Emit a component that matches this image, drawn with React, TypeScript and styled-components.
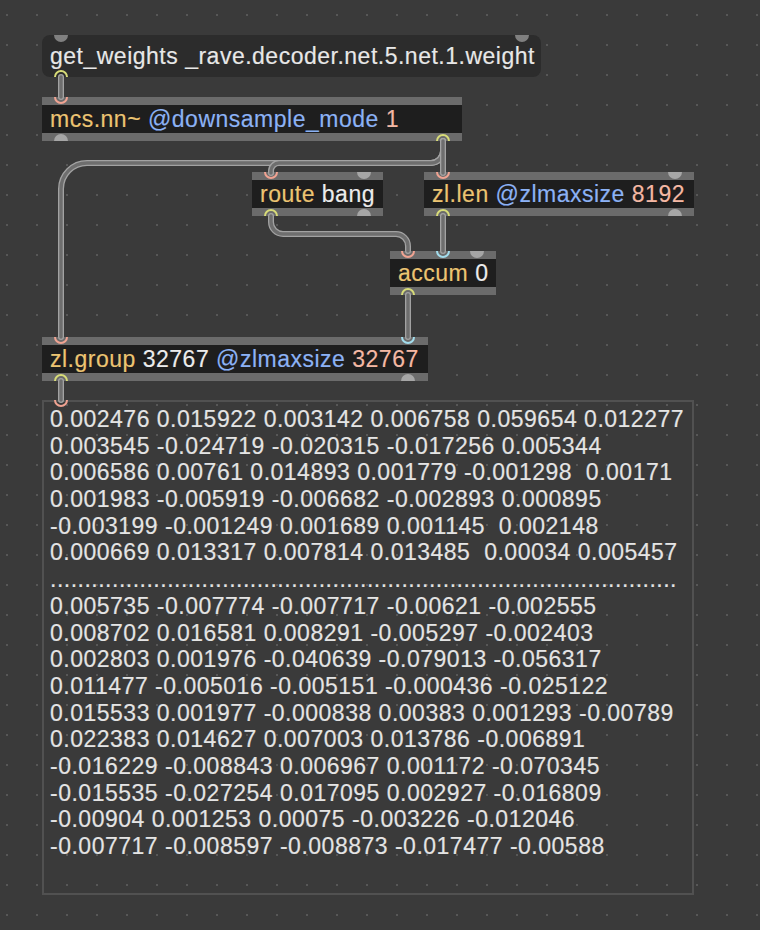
import React from 'react';
import styled, { createGlobalStyle } from 'styled-components';

const Global = createGlobalStyle`
  html, body { margin: 0; padding: 0; background: #3a3a3a; }
  body { font-family: "Liberation Sans", Arial, sans-serif; }
`;

const Canvas = styled.div`
  position: relative;
  width: 760px;
  height: 930px;
  overflow: hidden;
  background-color: #3a3a3a;
  background-image: radial-gradient(circle at center, #575757 0.9px, transparent 1.4px);
  background-size: 30px 30px;
  background-position: -8px 0;
  font-family: "Liberation Sans", Arial, sans-serif;
  font-size: 23px;
  letter-spacing: 0.5px;
  color: #e6e6e6;
  -webkit-text-stroke: 0.15px currentColor;
`;

const Node = styled.div<{ $x: number; $y: number; $w: number }>`
  position: absolute;
  left: ${(p) => p.$x}px;
  top: ${(p) => p.$y}px;
  width: ${(p) => p.$w}px;
  z-index: 1;
`;

const ObjectBox = styled.div`
  display: flex;
  flex-direction: column;
`;

const Bar = styled.div`
  height: 8px;
  background: #6b6b6b;
`;

const Body = styled.div`
  height: 28px;
  line-height: 28px;
  background: #1e1e1e;
  padding: 0 8px;
  white-space: nowrap;
  overflow: hidden;
`;

const Message = styled.div`
  height: 42px;
  line-height: 42px;
  background: #2c2c2c;
  border-radius: 8px;
  padding: 0 8px;
  white-space: nowrap;
  color: #e8e8e8;
`;

const ListBox = styled.div`
  box-sizing: border-box;
  height: 495px;
  border: 2px solid #515151;
  padding: 4px 6px;
  display: flex;
  flex-direction: column;
  white-space: pre;
  color: #e4e4e4;
`;

const Line = styled.div`
  height: 26.7px;
  line-height: 26.7px;
`;

const Name = styled.span`
  color: #ecc472;
`;
const Attr = styled.span`
  color: #8cb2f5;
`;
const Num = styled.span`
  color: #f4b8a4;
`;
const Arg = styled.span`
  color: #ececec;
`;

const Port = styled.span<{ $edge: 'top' | 'bottom'; $pos: number; $color?: string }>`
  position: absolute;
  left: ${(p) => p.$pos - 7}px;
  ${(p) => p.$edge}: 0;
  width: 14px;
  height: 7px;
  overflow: hidden;
  &::before {
    content: '';
    position: absolute;
    left: 0;
    ${(p) => (p.$edge === 'top' ? 'top: -7px;' : 'bottom: -7px;')}
    width: 14px;
    height: 14px;
    box-sizing: border-box;
    border-radius: 50%;
    ${(p) => (p.$color ? `border: 2px solid ${p.$color};` : 'background: rgba(255,255,255,0.4);')}
  }
`;

const Wires = styled.svg`
  position: absolute;
  left: 0;
  top: 0;
  z-index: 2;
  pointer-events: none;
`;

const CordOuter = styled.path`
  fill: none;
  stroke: #a2a2a2;
  stroke-width: 6;
  stroke-linecap: round;
`;
const CordInner = styled.path`
  fill: none;
  stroke: #6e6e6e;
  stroke-width: 3.4;
  stroke-linecap: round;
`;

const SALMON = '#f0a392';
const LIME = '#d8dc78';
const CYAN = '#a2dcec';

const cords = [
  'M61 77 V97',
  'M443 141 V151 A12 12 0 0 1 431 163 H87 A26 26 0 0 0 61 189 V337',
  'M443 141 V151 A12 12 0 0 1 431 163 H279 A8 8 0 0 0 271 171 V173',
  'M443 141 V173',
  'M271 216 V222 A12 12 0 0 0 283 234 H396 A12 12 0 0 1 408 246 V251',
  'M443 216 V251',
  'M408 295 V337',
  'M61 381 V400',
];

const lines = [
  '0.002476 0.015922 0.003142 0.006758 0.059654 0.012277',
  '0.003545 -0.024719 -0.020315 -0.017256 0.005344',
  '0.006586 0.00761 0.014893 0.001779 -0.001298  0.00171',
  '0.001983 -0.005919 -0.006682 -0.002893 0.000895',
  '-0.003199 -0.001249 0.001689 0.001145  0.002148',
  '0.000669 0.013317 0.007814 0.013485  0.00034 0.005457',
  '.'.repeat(91),
  '0.005735 -0.007774 -0.007717 -0.00621 -0.002555',
  '0.008702 0.016581 0.008291 -0.005297 -0.002403',
  '0.002803 0.001976 -0.040639 -0.079013 -0.056317',
  '0.011477 -0.005016 -0.005151 -0.000436 -0.025122',
  '0.015533 0.001977 -0.000838 0.00383 0.001293 -0.00789',
  '0.022383 0.014627 0.007003 0.013786 -0.006891',
  '-0.016229 -0.008843 0.006967 0.001172 -0.070345',
  '-0.015535 -0.027254 0.017095 0.002927 -0.016809',
  '-0.00904 0.001253 0.00075 -0.003226 -0.012046',
  '-0.007717 -0.008597 -0.008873 -0.017477 -0.00588',
];

export default function App() {
  return (
    <>
      <Global />
      <Canvas>
        <Node $x={42} $y={35} $w={499}>
          <Message>get_weights _rave.decoder.net.5.net.1.weight</Message>
          <Port $edge="top" $pos={19} />
          <Port $edge="top" $pos={480} />
          <Port $edge="bottom" $pos={19} $color={LIME} />
        </Node>

        <Node $x={42} $y={97} $w={420}>
          <ObjectBox>
            <Bar />
            <Body>
              <Name>mcs.nn~</Name> <Attr>@downsample_mode</Attr> <Num>1</Num>
            </Body>
            <Bar />
          </ObjectBox>
          <Port $edge="top" $pos={19} $color={SALMON} />
          <Port $edge="bottom" $pos={19} />
          <Port $edge="bottom" $pos={401} $color={LIME} />
        </Node>

        <Node $x={252} $y={172} $w={131}>
          <ObjectBox>
            <Bar />
            <Body>
              <Name>route</Name> <Arg>bang</Arg>
            </Body>
            <Bar />
          </ObjectBox>
          <Port $edge="top" $pos={19} $color={SALMON} />
          <Port $edge="top" $pos={112} />
          <Port $edge="bottom" $pos={19} $color={LIME} />
          <Port $edge="bottom" $pos={112} />
        </Node>

        <Node $x={424} $y={172} $w={270}>
          <ObjectBox>
            <Bar />
            <Body>
              <Name>zl.len</Name> <Attr>@zlmaxsize</Attr> <Num>8192</Num>
            </Body>
            <Bar />
          </ObjectBox>
          <Port $edge="top" $pos={19} $color={SALMON} />
          <Port $edge="top" $pos={251} />
          <Port $edge="bottom" $pos={19} $color={LIME} />
          <Port $edge="bottom" $pos={251} />
        </Node>

        <Node $x={390} $y={251} $w={106}>
          <ObjectBox>
            <Bar />
            <Body>
              <Name>accum</Name> <Arg>0</Arg>
            </Body>
            <Bar />
          </ObjectBox>
          <Port $edge="top" $pos={18} $color={SALMON} />
          <Port $edge="top" $pos={53} $color={CYAN} />
          <Port $edge="top" $pos={87} />
          <Port $edge="bottom" $pos={18} $color={LIME} />
        </Node>

        <Node $x={42} $y={337} $w={386}>
          <ObjectBox>
            <Bar />
            <Body>
              <Name>zl.group</Name> <Arg>32767</Arg> <Attr>@zlmaxsize</Attr> <Num>32767</Num>
            </Body>
            <Bar />
          </ObjectBox>
          <Port $edge="top" $pos={19} $color={SALMON} />
          <Port $edge="top" $pos={366} $color={CYAN} />
          <Port $edge="bottom" $pos={19} $color={LIME} />
          <Port $edge="bottom" $pos={366} />
        </Node>

        <Node $x={42} $y={400} $w={652}>
          <ListBox>
            {lines.map((l, i) => (
              <Line key={i}>{l}</Line>
            ))}
          </ListBox>
          <Port $edge="top" $pos={19} $color={SALMON} />
        </Node>

        <Wires width={760} height={930} viewBox="0 0 760 930">
          {cords.map((d, i) => (
            <g key={i}>
              <CordOuter d={d} />
              <CordInner d={d} />
            </g>
          ))}
        </Wires>
      </Canvas>
    </>
  );
}
